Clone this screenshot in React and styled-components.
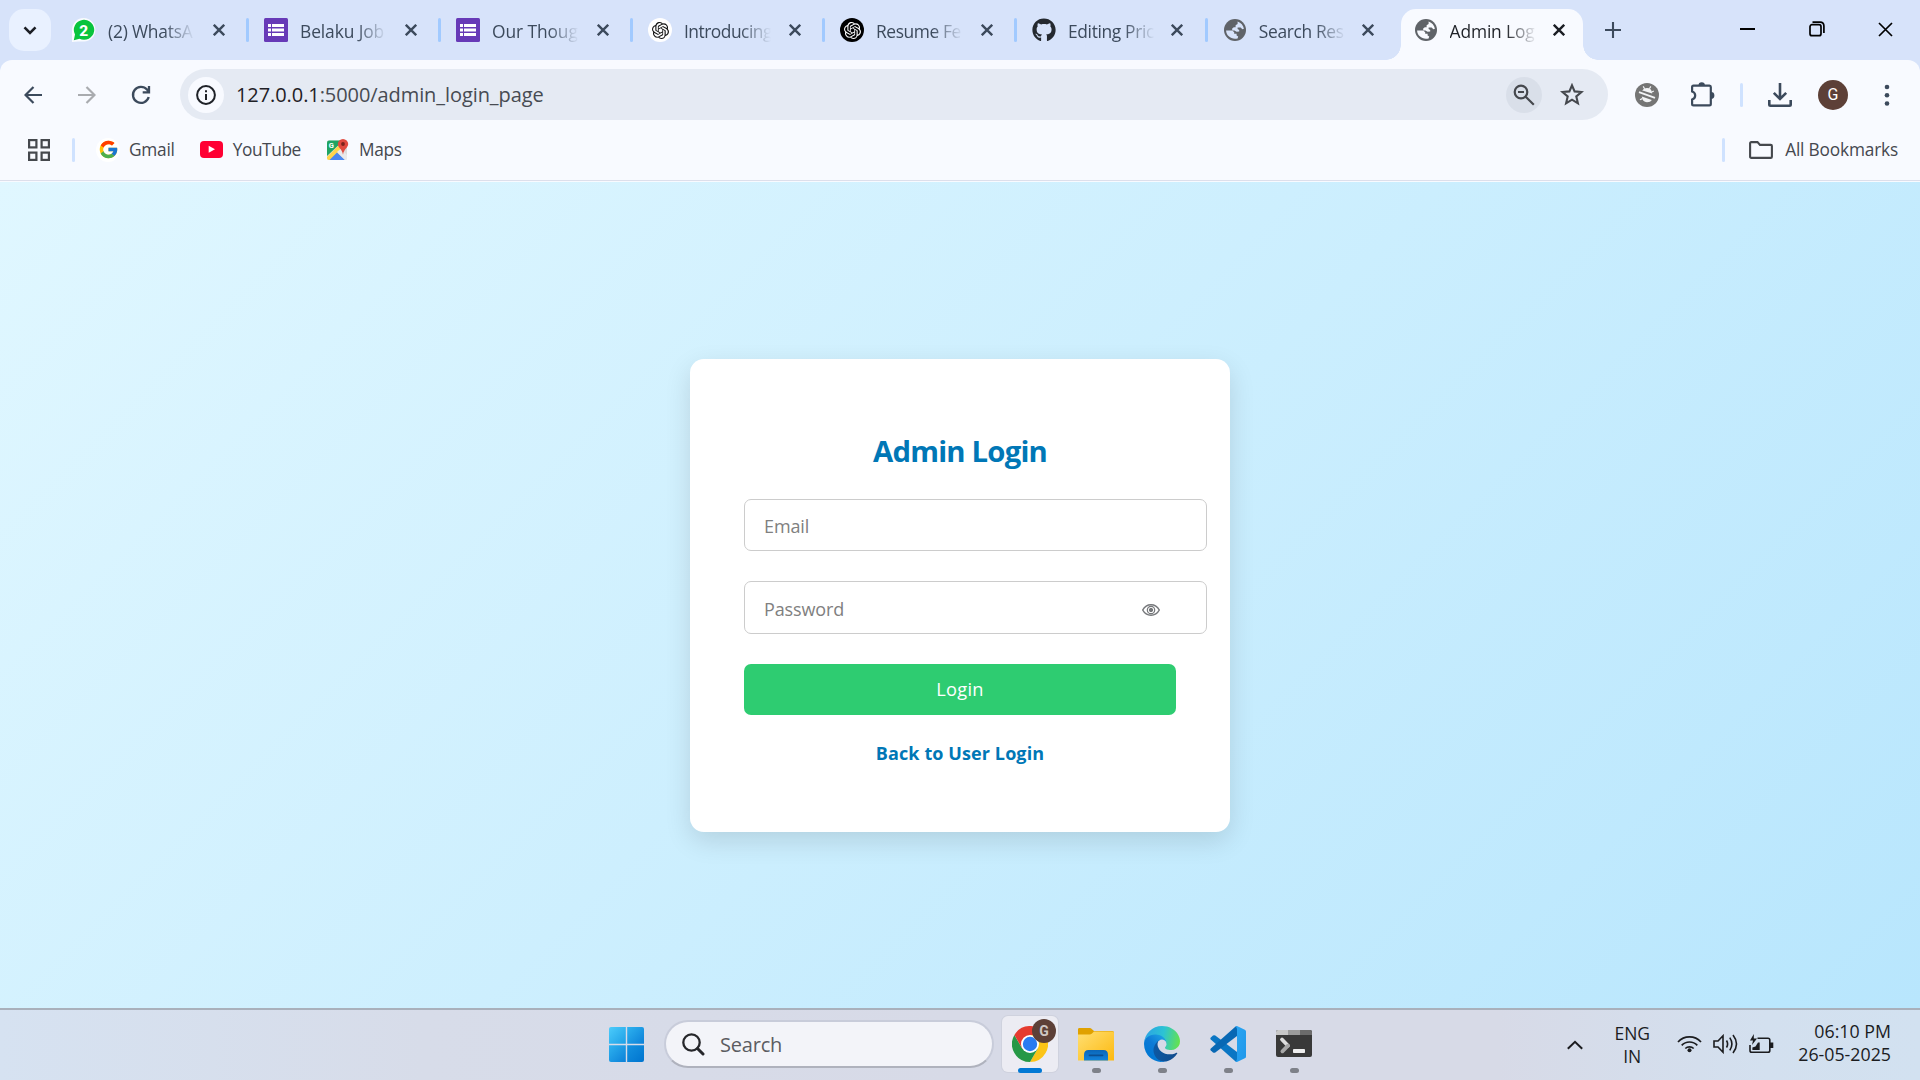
import React from "react";
import styled, { createGlobalStyle, css } from "styled-components";
import { FaGithub } from "react-icons/fa";
import { FcGoogle } from "react-icons/fc";
import { SiOpenai } from "react-icons/si";

const GlobalStyle = createGlobalStyle`
  * { box-sizing: border-box; }
  body {
    margin: 0;
    font-family: "Open Sans", "Noto Sans", sans-serif;
    overflow: hidden;
  }
`;

const Screen = styled.div`
  width: 1920px;
  height: 1080px;
  display: flex;
  flex-direction: column;
  overflow: hidden;
`;

/* ---------- tab strip ---------- */

const TabStrip = styled.div`
  height: 60px;
  background: #d7e3fa;
  display: flex;
  align-items: flex-start;
  padding: 9px 0 0 9px;
`;

const TabSearch = styled.button`
  width: 42px;
  height: 42px;
  margin-right: 21px;
  padding: 0;
  border: 0;
  border-radius: 15px;
  background: #e9f1ff;
  display: grid;
  place-items: center;
`;

const Tab = styled.div`
  position: relative;
  flex: none;
  width: ${(p) => (p.$tight ? 190.8 : 192)}px;
  height: 51px;
  padding-bottom: 9px;
  display: flex;
  align-items: center;
  color: #3c4a5c;
  ${(p) =>
    p.$active &&
    css`
      width: 182px;
      margin-left: -13px;
      padding-left: 13px;
      background: #f8faff;
      border-radius: 15px 15px 0 0;
      color: #1f2228;
      &::before,
      &::after {
        content: "";
        position: absolute;
        bottom: 0;
        width: 15px;
        height: 15px;
      }
      &::before {
        left: -15px;
        background: radial-gradient(circle at 0 0, transparent 14.5px, #f8faff 15px);
      }
      &::after {
        right: -15px;
        background: radial-gradient(circle at 100% 0, transparent 14.5px, #f8faff 15px);
      }
    `}
`;

const Favicon = styled.span`
  flex: none;
  width: 24px;
  height: 24px;
  margin-right: 12px;
  display: grid;
  place-items: center;
  svg { display: block; }
`;

const AiBadge = styled.span`
  width: 24px;
  height: 24px;
  border-radius: 50%;
  display: grid;
  place-items: center;
  background: ${(p) => (p.$dark ? "#000" : "#fff")};
  color: ${(p) => (p.$dark ? "#fff" : "#111")};
`;

const TabTitle = styled.span`
  flex: none;
  width: 87px;
  white-space: nowrap;
  font-size: 17.4px;
  line-height: 28px;
  padding-top: 1px;
  letter-spacing: ${(p) => p.$spacing || -0.4}px;
  mask-image: linear-gradient(90deg, #000 56px, transparent 87px);
`;

const TabClose = styled.span`
  flex: none;
  width: 24px;
  margin-left: ${(p) => (p.$tight ? 10 : 12)}px;
  display: grid;
  place-items: center;
`;

const TabDivider = styled.span`
  flex: none;
  width: 3px;
  height: 24px;
  margin-left: ${(p) => (p.$tight ? 16 : 15)}px;
  border-radius: 1.5px;
  background: #a1caff;
`;

const NewTab = styled.span`
  width: 60px;
  height: 42px;
  display: grid;
  place-items: center;
`;

const WindowControls = styled.div`
  margin-left: auto;
  display: flex;
  height: 42px;
`;

const WindowButton = styled.span`
  width: 69px;
  display: grid;
  place-items: center;
  padding-bottom: 2px;
`;

/* ---------- toolbar ---------- */

const BrowserPanel = styled.div`
  background: #d7e3fa;
`;

const PanelSurface = styled.div`
  background: #f8faff;
  border-radius: 12px 12px 0 0;
  height: 122px;
`;

const Toolbar = styled.div`
  height: 60px;
  padding: 9px 5px 0 6px;
  display: flex;
  align-items: center;
`;

const ToolCell = styled.span`
  flex: none;
  width: ${(p) => p.$w || 54}px;
  height: 51px;
  display: grid;
  place-items: center;
`;

const Omnibox = styled.div`
  width: 1428px;
  height: 51px;
  margin: 0 12px;
  padding: 0 18px 0 8px;
  border-radius: 26px;
  background: #e5eaf3;
  display: flex;
  align-items: center;
`;

const RoundChip = styled.span`
  flex: none;
  width: 36px;
  height: 36px;
  border-radius: 50%;
  display: grid;
  place-items: center;
  background: ${(p) => p.$bg || "transparent"};
`;

const Url = styled.span`
  flex: 1;
  margin-left: 12px;
  font-size: 20px;
  letter-spacing: -0.08px;
  color: #474b52;
  b { font-weight: 400; color: #1f2126; }
`;

const StarSlot = styled.span`
  margin-left: 12px;
  width: 36px;
  display: grid;
  place-items: center;
`;

const Rule = styled.span`
  flex: none;
  width: 3px;
  height: 24px;
  border-radius: 1.5px;
  background: #cfe2ff;
`;

const Avatar = styled.span`
  width: 30px;
  height: 30px;
  border-radius: 50%;
  background: #5d4037;
  color: #fff;
  display: grid;
  place-items: center;
  font: 400 16px Roboto, sans-serif;
`;

const BookmarkBar = styled.div`
  height: 61px;
  padding: 0 22px 1px 28px;
  border-bottom: 1px solid #dddfeb;
  display: flex;
  align-items: center;
`;

const Bookmark = styled.span`
  display: flex;
  align-items: center;
  margin-left: ${(p) => p.$gap}px;
  color: #45484f;
  font-size: 17.3px;
  letter-spacing: ${(p) => p.$spacing || -0.25}px;
`;

const BookmarkIcon = styled.span`
  width: ${(p) => p.$w}px;
  margin-right: ${(p) => p.$gap}px;
  display: grid;
  place-items: center;
  svg { display: block; }
`;

const GoogleDisc = styled.span`
  width: 24px;
  height: 24px;
  border-radius: 50%;
  background: #fff;
  display: grid;
  place-items: center;
`;

const Spacer = styled.span`
  flex: 1;
`;

/* ---------- page ---------- */

const Page = styled.main`
  height: 826px;
  background: linear-gradient(135deg, #e0f7ff, #b8e6fd);
  display: grid;
  place-items: center;
  padding-top: 1px;
`;

const Card = styled.form`
  width: 540px;
  height: 473px;
  padding: 69px 54px 0;
  border-radius: 14px;
  background: #fff;
  box-shadow: 0 9px 27px rgba(0, 0, 0, 0.12);
`;

const Title = styled.h2`
  margin: 0 0 24px;
  height: 47px;
  line-height: 46px;
  text-align: center;
  font-size: 29.3px;
  font-weight: 700;
  letter-spacing: -0.8px;
  color: #0077b6;
`;

const Field = styled.div`
  width: 463px;
  height: ${(p) => p.$h}px;
  margin-bottom: 30px;
  padding: 0 46px 0 19px;
  border: 1px solid #ccc;
  border-radius: 7px;
  display: flex;
  align-items: center;
`;

const Input = styled.input`
  flex: 1;
  min-width: 0;
  height: 100%;
  padding: 2px 0 0;
  border: 0;
  outline: 0;
  background: transparent;
  font: 400 18px "Open Sans", sans-serif;
  letter-spacing: -0.12px;
  &::placeholder { color: #808080; opacity: 1; }
`;

const EyeSlot = styled.span`
  padding-top: 4px;
  svg { display: block; }
`;

const LoginButton = styled.button`
  display: block;
  width: 432px;
  height: 51px;
  padding: 0 0 2px;
  border: 0;
  border-radius: 7px;
  background: #2ecc71;
  color: #fff;
  font: 500 18.2px "Open Sans", sans-serif;
  letter-spacing: 0.3px;
`;

const BackLink = styled.a`
  display: block;
  margin-top: 25px;
  text-align: center;
  font-size: 18px;
  line-height: 27px;
  font-weight: 700;
  letter-spacing: 0.1px;
  color: #0077b6;
`;

/* ---------- taskbar ---------- */

const Taskbar = styled.footer`
  height: 72px;
  border-top: 2px solid #a9b0bb;
  background: linear-gradient(90deg, #d6e2f1 0, #d7dce9 22%, #d7dae7 50%, #d7dae7 78%, #d3e0ef 92%, #d2e1f0 100%);
  display: flex;
  padding: 0 29px 0 609px;
`;

const StartButton = styled.span`
  width: 35px;
  height: 35px;
  margin: 17px 21px 0 0;
  svg { display: block; }
`;

const SearchBox = styled.div`
  width: 330px;
  height: 48px;
  margin: 10px 3px 0 -1px;
  padding: 0 0 0 16px;
  border: 2px solid #c8ccda;
  border-bottom: 2px solid #afb2bd;
  border-radius: 24px;
  background: #f3f4f9;
  display: flex;
  align-items: center;
  color: #5b5c61;
  font-size: 20px;
  letter-spacing: -0.2px;
  svg { margin-right: 15px; }
`;

const AppSlot = styled.div`
  flex: none;
  width: 66px;
  height: 70px;
  display: flex;
  flex-direction: column;
  align-items: center;
  padding-top: 6px;
`;

const AppTile = styled.div`
  position: relative;
  width: 56px;
  height: 56px;
  border-radius: 6px;
  display: flex;
  flex-direction: column;
  align-items: center;
  padding-top: 10px;
  background: ${(p) => (p.$active ? "#ececf3" : "transparent")};
  box-shadow: ${(p) => (p.$active ? "0 0 0 1px #cfd2de" : "none")};
  svg { display: block; flex: none; }
`;

const RunningMark = styled.span`
  flex: none;
  width: ${(p) => (p.$active ? 24 : 9)}px;
  height: 5px;
  margin-top: 6px;
  border-radius: 2.5px;
  background: ${(p) => (p.$active ? "#0078d4" : "#7e8189")};
`;

const ProfileBadge = styled.span`
  position: absolute;
  left: 30px;
  top: 3px;
  width: 24px;
  height: 24px;
  border-radius: 50%;
  background: #5d4037;
  color: #cfc7c4;
  display: grid;
  place-items: center;
  font: 700 14px Roboto, sans-serif;
`;

const Tray = styled.div`
  margin-left: auto;
  display: flex;
  align-items: center;
  height: 70px;
  color: #1b1c1f;
  line-height: 23px;
`;

const TrayIcons = styled.div`
  display: flex;
  align-items: center;
  gap: 11px;
  margin-right: 24px;
  padding-bottom: 2px;
`;

const Language = styled.div`
  width: 36px;
  margin: 0 27px 0 31px;
  text-align: center;
  font-size: 17.5px;
`;

const Clock = styled.div`
  text-align: right;
  font-size: 17.8px;
  padding-bottom: 4px;
`;

/* ---------- drawings ---------- */

const Cross = ({ size = 12, color = "#3c4a5c", w = 2.4 }) => (
  <svg width={size} height={size} viewBox="0 0 12 12" stroke={color} strokeWidth={w} fill="none">
    <path d="M.8 .8 11.2 11.2M11.2 .8 .8 11.2" />
  </svg>
);

const WhatsAppIcon = () => (
  <svg width="24" height="24" viewBox="0 0 24 24">
    <path d="M0 24V11.5A11.7 11.7 0 1 1 12 23.5C8 23.5 4 23.5 0 24Z" fill="#fff" opacity=".85" />
    <path d="M1.8 22.2 3 16.5A10.2 10 0 1 1 7.5 20.8Z" fill="#08c43d" />
    <text x="11.8" y="17.600" textAnchor="middle" fontFamily="Roboto, sans-serif" fontWeight="800" fontSize="15.500" fill="#fff">2</text>
  </svg>
);

const FormsIcon = () => (
  <svg width="24" height="24" viewBox="0 0 24 24">
    <rect width="24" height="24" rx="1.5" fill="#673ab7" />
    <g fill="#fff">
      <rect x="4" y="6" width="3" height="3" /><rect x="8" y="6" width="12" height="3" />
      <rect x="4" y="10.5" width="3" height="3" /><rect x="8" y="10.5" width="12" height="3" />
      <rect x="4" y="15" width="3" height="3" /><rect x="8" y="15" width="12" height="3" />
    </g>
  </svg>
);

const GlobeIcon = ({ bg }) => (
  <svg width="22" height="22" viewBox="0 0 22 22">
    <circle cx="11" cy="11" r="11" fill="#5f6368" />
    <path d="M13.600 2.600C17 3.700 19.400 6.600 19.900 9.800L18.400 10.200 16.600 8.400H13.600V10L15.200 11V12.400L12.600 12.800 10.400 11.400H8.200V9.600L9.800 8.200H11.600V6.200L13.600 5Z" fill={bg} />
    <path d="M2.100 11.600H8.200L10.200 13.200V14.800H12.600V16.600L14.200 17.400 13.600 19.400C8 21 2.200 17.200 2.100 11.600Z" fill={bg} />
  </svg>
);

const YouTubeIcon = () => (
  <svg width="23" height="17" viewBox="0 0 23 17">
    <rect width="23" height="17" rx="4" fill="#ff0033" />
    <path d="M8.7 4.8 15 8.3 8.7 11.8Z" fill="#fff" />
  </svg>
);

const MapsIcon = () => (
  <svg width="23" height="23" viewBox="0 0 23 23">
    <clipPath id="mapsTile"><rect x="0" y="2.5" width="20" height="19.5" rx="2" /></clipPath>
    <g clipPath="url(#mapsTile)">
      <rect x="0" y="2" width="20" height="20" fill="#dcdcdc" />
      <path d="M0 2H17L0 18Z" fill="#1fa463" />
      <path d="M0 19 14 5 18 9 3 24H0Z" fill="#ffd54a" />
      <path d="M2.500 22 10 14.500 18 22Z" fill="#4a87f0" />
      <path d="M10 14 14 10.500 21 18V22H18Z" fill="#e9e9ea" />
    </g>
    <text x="1.800" y="9.600" fontFamily="Roboto, sans-serif" fontWeight="700" fontSize="7.500" fill="#fff">G</text>
    <path d="M16 .9A5.200 5.200 0 0 0 10.800 6.100C10.800 9.800 15 10.600 16 16.800 17 10.600 21.200 9.800 21.200 6.100A5.200 5.200 0 0 0 16 .9Z" fill="#e04a3f" />
    <circle cx="16" cy="6" r="1.900" fill="#7b231c" />
  </svg>
);

const ExtensionBadge = () => (
  <svg width="24" height="24" viewBox="0 0 24 24">
    <circle cx="12" cy="12" r="12" fill="#757575" />
    <path d="M8.200 3.400 9.600 5.800M15.800 3.400 14.400 5.800M5 16.800 7.200 15.600M18.800 8 16.800 9" stroke="#f3f4f6" strokeWidth="1.200" fill="none" />
    <path d="M7.400 7.800C8.400 5.600 9.800 5 12 5C15 5 16.800 6.800 17.200 10.600L7.400 7.400ZM6.800 13.600 16.800 17C15.800 18.600 14.400 19.200 12 19.200C9 19.200 7.200 17.200 6.800 13.600Z" fill="#f3f4f6" />
    <path d="M4 9.200 20 14.800" stroke="#f3f4f6" strokeWidth="1.800" />
  </svg>
);

const WindowsLogo = () => (
  <svg width="35" height="35" viewBox="0 0 35 35">
    <linearGradient id="win" x1="0" y1="0" x2="1" y2="1" gradientUnits="objectBoundingBox">
      <stop offset="0" stopColor="#4cccfb" /><stop offset="1" stopColor="#1d9fe6" />
    </linearGradient>
    <linearGradient id="win2" x1="0" y1="0" x2="1" y2="1">
      <stop offset="0" stopColor="#2eb2ef" /><stop offset="1" stopColor="#0b80d8" />
    </linearGradient>
    <linearGradient id="win3" x1="0" y1="0" x2="1" y2="1">
      <stop offset="0" stopColor="#1492e0" /><stop offset="1" stopColor="#0074cf" />
    </linearGradient>
    <path d="M0 2Q0 0 2 0H16.8V16.8H0Z" fill="url(#win)" />
    <path d="M18.2 0H33Q35 0 35 2V16.8H18.2Z" fill="url(#win2)" />
    <path d="M0 18.2H16.8V35H2Q0 35 0 33Z" fill="url(#win2)" />
    <path d="M18.2 18.2H35V33Q35 35 33 35H18.2Z" fill="url(#win3)" />
  </svg>
);

const ChromeIcon = () => (
  <svg width="36" height="36" viewBox="0 0 36 36">
    <path d="M18 18 2.4 9A18 18 0 0 1 33.6 9Z" fill="#e53b30" />
    <path d="M18 9H33.6A18 18 0 0 1 18 36L25.8 22.5Z" fill="#fcc417" />
    <path d="M2.4 9A18 18 0 0 0 18 36L25.8 22.5 10.2 22.5Z" fill="#269846" />
    <path d="M2.4 9H18V18L10.2 22.5Z" fill="#e53b30" />
    <circle cx="18" cy="18" r="9" fill="#fff" />
    <circle cx="18" cy="18" r="7.2" fill="#2a7bf0" />
  </svg>
);

const ExplorerIcon = () => (
  <svg width="36" height="36" viewBox="0 0 36 36">
    <linearGradient id="folder" x1="0" y1="0" x2="1" y2="1">
      <stop offset="0" stopColor="#ffdf73" /><stop offset="1" stopColor="#fdb90f" />
    </linearGradient>
    <linearGradient id="drive" x1="0" y1="0" x2="0" y2="1">
      <stop offset="0" stopColor="#0b66b8" /><stop offset="1" stopColor="#1284dd" />
    </linearGradient>
    <path d="M0 3.3Q0 2 1.5 2H11.5Q13 2 14 3.2L16 5H34.5Q36 5 36 6.5V14H0Z" fill="#e0a100" />
    <path d="M0 8.5H11.5Q13 8.5 14 7.5L16 5.6H34.6Q36 5.6 36 7V34.6H0Z" fill="url(#folder)" />
    <path d="M6 34.6V29Q6 24 10.5 24H25.5Q30 24 30 29V34.6Z" fill="url(#drive)" />
    <path d="M11.5 29.3H24.5" stroke="#0b4f92" strokeWidth="1.8" strokeLinecap="round" />
  </svg>
);

const EdgeIcon = () => (
  <svg width="36" height="36" viewBox="0 0 256 256">
    <linearGradient id="edgeA" x1="63" y1="177" x2="242" y2="177" gradientUnits="userSpaceOnUse">
      <stop offset="0" stopColor="#0c59a4" /><stop offset="1" stopColor="#114a8b" />
    </linearGradient>
    <linearGradient id="edgeB" x1="157" y1="100" x2="46" y2="222" gradientUnits="userSpaceOnUse">
      <stop offset="0" stopColor="#1b9de2" /><stop offset=".5" stopColor="#0d7ad6" /><stop offset="1" stopColor="#0078d4" />
    </linearGradient>
    <linearGradient id="edgeC" x1="10" y1="60" x2="256" y2="110" gradientUnits="userSpaceOnUse">
      <stop offset="0" stopColor="#2aa5e4" /><stop offset=".5" stopColor="#2cc3d4" /><stop offset="1" stopColor="#66e34a" />
    </linearGradient>
    <path d="M231 190.500a93.700 93.700 0 0 1-10.500 4.700 101.900 101.900 0 0 1-35.900 6.500c-47.300 0-88.500-32.500-88.500-74.300a31.500 31.500 0 0 1 16.400-27.300c-42.800 1.800-53.800 46.400-53.800 72.500 0 73.900 68.100 81.400 82.800 81.400 7.900 0 19.800-2.300 27-4.600l1.300-.4a128.300 128.300 0 0 0 66.600-52.800 4 4 0 0 0-5.400-5.700Z" fill="url(#edgeA)" />
    <path d="M105.700 241.400a79.200 79.200 0 0 1-22.700-21.300 80.700 80.700 0 0 1 29.500-120c3.200-1.500 8.500-4.100 15.600-4a32.400 32.400 0 0 1 25.700 13 31.900 31.900 0 0 1 6.300 18.700c0-.2 24.500-79.600-80-79.600-43.900 0-80 41.600-80 78.200a130.200 130.200 0 0 0 12.100 56 128 128 0 0 0 156.400 67 75.500 75.500 0 0 1-62.800-8Z" fill="url(#edgeB)" />
    <path d="M152.300 148.900c-.9 1-3.400 2.500-3.400 5.600 0 2.600 1.700 5.200 4.800 7.300 14.300 10 41.400 8.600 41.500 8.600a59.600 59.600 0 0 0 30.300-8.300 61.400 61.400 0 0 0 30.400-52.900c.3-22.400-8-37.300-11.300-43.900C223.500 23.900 177.700 0 128 0A128 128 0 0 0 0 126.200c.5-36.500 36.800-66 80-66 3.500 0 23.500.3 42 10 16.300 8.600 24.900 19 30.800 29.200 6.200 10.700 7.300 24.100 7.300 29.500 0 5.300-2.700 13.300-7.800 20Z" fill="url(#edgeC)" />
  </svg>
);

const CodeIcon = () => (
  <svg width="36" height="36" viewBox="0 0 36 36">
    <linearGradient id="codeR" x1="0" y1="0" x2="1" y2="1">
      <stop offset="0" stopColor="#2ba6f2" /><stop offset="1" stopColor="#1f97ea" />
    </linearGradient>
    <path d="M.8 11.600 3 9.500Q4.200 8.800 5.300 9.600L27 26V36L25.300 35.200.8 13.600Q-.1 12.600.8 11.600Z" fill="#0a76c4" />
    <path d="M.8 24.400 3 26.500Q4.200 27.200 5.300 26.400L27 10V0L25.300.8.8 22.400Q-.1 23.400.8 24.400Z" fill="#0868b4" />
    <path d="M27 0 34.800 3.700Q36 4.300 36 5.600V30.400Q36 31.700 34.800 32.300L27 36Q25.800 36 25.200 35.200 27 35 27 33V3Q27 1 25.200.8 26 0 27 0Z" fill="url(#codeR)" />
  </svg>
);

const TerminalIcon = () => (
  <svg width="36" height="36" viewBox="0 0 36 36">
    <rect y="4" width="36" height="27" rx="2" fill="#393939" />
    <path d="M0 9V6Q0 4 2 4H12V9Z" fill="#c8c8c8" />
    <path d="M12 4H24V9H12Z" fill="#9b9b9b" />
    <path d="M24 4H34Q36 4 36 6V9H24Z" fill="#6b6b6b" />
    <path d="M6 13.500 12 19.700" stroke="#dedede" strokeWidth="3.8" strokeLinecap="round" />
    <path d="M12 19.700 6.400 25.300" stroke="#a8a8a8" strokeWidth="3.8" strokeLinecap="round" />
    <rect x="17" y="23" width="12" height="4" rx=".8" fill="#eee" />
  </svg>
);

const tabs = [
  { title: "(2) WhatsA", icon: <WhatsAppIcon />, spacing: -0.2 },
  { title: "Belaku Job", icon: <FormsIcon />, spacing: -0.1 },
  { title: "Our Thoug", icon: <FormsIcon />, spacing: -0.1 },
  { title: "Introducing", icon: <AiBadge><SiOpenai size={17} /></AiBadge>, spacing: -0.5 },
  { title: "Resume Fe", icon: <AiBadge $dark><SiOpenai size={17} /></AiBadge>, spacing: -0.4 },
  { title: "Editing Pric", icon: <FaGithub size={24} color="#24292f" />, spacing: -0.35, tight: true },
  { title: "Search Res", icon: <GlobeIcon bg="#d7e3fa" />, spacing: -0.35, tight: true, last: true },
  { title: "Admin Log", icon: <GlobeIcon bg="#f8faff" />, spacing: -0.15, tight: true, active: true },
];

const apps = [
  { icon: <ChromeIcon />, active: true },
  { icon: <ExplorerIcon /> },
  { icon: <EdgeIcon /> },
  { icon: <CodeIcon /> },
  { icon: <TerminalIcon /> },
];

function Browser() {
  return (
    <>
      <TabStrip>
        <TabSearch>
          <svg width="14" height="9" viewBox="0 0 14 9" fill="none" stroke="#1b1e24" strokeWidth="2.6"><path d="M1.500 1.300 7 6.800 12.500 1.300" /></svg>
        </TabSearch>
        {tabs.map((t) => (
          <Tab key={t.title} $active={t.active} $tight={t.tight}>
            <Favicon>{t.icon}</Favicon>
            <TabTitle $spacing={t.spacing}>{t.title}</TabTitle>
            <TabClose $tight={t.tight}><Cross color={t.active ? "#1b1e24" : "#3c4a5c"} /></TabClose>
            {!t.active && !t.last && <TabDivider $tight={t.tight} />}
          </Tab>
        ))}
        <NewTab>
          <svg width="16" height="16" viewBox="0 0 16 16" stroke="#3c4a5c" strokeWidth="2.1"><path d="M8 0V16M0 8H16" /></svg>
        </NewTab>
        <WindowControls>
          <WindowButton><svg width="15" height="15" viewBox="0 0 15 15"><path d="M0 7H15" stroke="#000" strokeWidth="2" /></svg></WindowButton>
          <WindowButton>
            <svg width="16" height="16" viewBox="0 0 16 16" fill="none" stroke="#000" strokeWidth="1.700">
              <rect x="1" y="3.700" width="11" height="11" rx="2" />
              <path d="M3.500 1.100H11Q14.900 1.100 14.900 5V12" />
            </svg>
          </WindowButton>
          <WindowButton><Cross size={15} color="#000" w={1.35} /></WindowButton>
        </WindowControls>
      </TabStrip>
      <BrowserPanel>
        <PanelSurface>
          <Toolbar>
            <ToolCell>
              <svg width="18" height="18" viewBox="0 0 18 18" fill="none" stroke="#3c4a5c" strokeWidth="2.200"><path d="M18 9H1.800M9.500 1 1.500 9 9.500 17" /></svg>
            </ToolCell>
            <ToolCell>
              <svg width="18" height="18" viewBox="0 0 18 18" fill="none" stroke="#a9abaf" strokeWidth="2.200"><path d="M0 9H16.200M8.500 1 16.500 9 8.500 17" /></svg>
            </ToolCell>
            <ToolCell>
              <svg width="20" height="20" viewBox="0 0 20 20" fill="none" stroke="#3c4a5c" strokeWidth="2.300"><path d="M17.700 12A8 8 0 1 1 16 4.600L18 7M18 1V7.300H11.700" /></svg>
            </ToolCell>
            <Omnibox>
              <RoundChip $bg="#f8faff">
                <svg width="20" height="20" viewBox="0 0 20 20" fill="none" stroke="#1f2228" strokeWidth="2"><circle cx="10" cy="10" r="8.900" /><path d="M10 9V15M10 5.200V7.300" /></svg>
              </RoundChip>
              <Url><b>127.0.0.1</b>:5000/admin_login_page</Url>
              <RoundChip $bg="#d9dfe9">
                <svg width="22" height="22" viewBox="0 0 22 22" fill="none" stroke="#45484d" strokeWidth="2.200"><circle cx="8" cy="8" r="6.300" /><path d="M12.700 12.700 20.800 20.800M5 8H11" /></svg>
              </RoundChip>
              <StarSlot>
                <svg width="24" height="23" viewBox="0 0 24 23" fill="none" stroke="#45484d" strokeWidth="2.100"><path d="M12 2.300 14.600 8.400 21.500 9 16.300 13.500 17.900 20.300 12 16.700 6.100 20.300 7.700 13.500 2.500 9 9.400 8.400Z" /></svg>
              </StarSlot>
            </Omnibox>
            <ToolCell $w={54}><ExtensionBadge /></ToolCell>
            <ToolCell $w={57}>
              <svg width="25" height="25" viewBox="0 0 25 25">
                <path d="M3.500 3.600H19.500Q20.800 3.600 20.800 5V22Q20.800 23.400 19.400 23.400H3.500Q2.100 23.400 2.100 22V17.500Q5.200 16.500 5.200 13.500 5.200 10.500 2.100 9.500V5Q2.100 3.600 3.500 3.600Z" fill="none" stroke="#3c4a5c" strokeWidth="2.200" />
                <path d="M8.500 3.500A3.200 3.200 0 0 1 14.900 3.500ZM21 10A3.400 3.400 0 0 1 21 16.800Z" fill="#3c4a5c" />
              </svg>
            </ToolCell>
            <ToolCell $w={21}><Rule /></ToolCell>
            <ToolCell $w={55}>
              <svg width="24" height="24" viewBox="0 0 24 24" fill="none" stroke="#3c4a5c" strokeWidth="2.600"><path d="M12 0V15.500M5.800 9.800 12 16 18.200 9.800M1.300 17V21.500Q1.300 22.700 2.500 22.700H21.500Q22.700 22.700 22.700 21.500V17" /></svg>
            </ToolCell>
            <ToolCell $w={52}><Avatar>G</Avatar></ToolCell>
            <ToolCell $w={56}>
              <svg width="6" height="22" viewBox="0 0 6 22" fill="#3c4a5c"><circle cx="3" cy="3" r="2.300" /><circle cx="3" cy="11.300" r="2.300" /><circle cx="3" cy="19.500" r="2.300" /></svg>
            </ToolCell>
          </Toolbar>
          <BookmarkBar>
            <BookmarkIcon $w={22} $gap={22}>
              <svg width="22" height="22" viewBox="0 0 22 22" fill="none" stroke="#45484d" strokeWidth="2.200">
                <rect x="1.100" y="1.100" width="7.300" height="7.300" /><rect x="13.600" y="1.100" width="7.300" height="7.300" />
                <rect x="1.100" y="13.600" width="7.300" height="7.300" /><rect x="13.600" y="13.600" width="7.300" height="7.300" />
              </svg>
            </BookmarkIcon>
            <Rule />
            <Bookmark $gap={21}><BookmarkIcon $w={24} $gap={9}><GoogleDisc><FcGoogle size={21} /></GoogleDisc></BookmarkIcon>Gmail</Bookmark>
            <Bookmark $gap={25} $spacing={-0.4}><BookmarkIcon $w={23} $gap={10}><YouTubeIcon /></BookmarkIcon>YouTube</Bookmark>
            <Bookmark $gap={26}><BookmarkIcon $w={23} $gap={9}><MapsIcon /></BookmarkIcon>Maps</Bookmark>
            <Spacer />
            <Rule />
            <Bookmark $gap={23} $spacing={-0.18}>
              <BookmarkIcon $w={25} $gap={12}>
                <svg width="24" height="18" viewBox="0 0 24 18" fill="none" stroke="#45484d" strokeWidth="2.100"><path d="M1.100 2.300Q1.100 1.100 2.300 1.100H8.500L11 3.900H21.700Q22.900 3.900 22.900 5.100V15.700Q22.900 16.900 21.700 16.900H2.300Q1.100 16.900 1.100 15.700Z" /></svg>
              </BookmarkIcon>
              All Bookmarks
            </Bookmark>
          </BookmarkBar>
        </PanelSurface>
      </BrowserPanel>
    </>
  );
}

function LoginCard() {
  return (
    <Page>
      <Card>
        <Title>Admin Login</Title>
        <Field $h={52}><Input type="email" placeholder="Email" /></Field>
        <Field $h={53}>
          <Input type="password" placeholder="Password" />
          <EyeSlot>
            <svg width="18" height="12" viewBox="0 0 18 12" fill="none" stroke="#75777a">
              <path d="M.7 6Q3.500 .8 9 .8T17.300 6Q14.500 11.200 9 11.200T.7 6Z" strokeWidth="1.500" />
              <circle cx="9" cy="6" r="3.700" strokeWidth="1.200" />
              <circle cx="9" cy="6" r="1.700" fill="#75777a" />
            </svg>
          </EyeSlot>
        </Field>
        <LoginButton type="button">Login</LoginButton>
        <BackLink>Back to User Login</BackLink>
      </Card>
    </Page>
  );
}

function WindowsTaskbar() {
  return (
    <Taskbar>
      <StartButton><WindowsLogo /></StartButton>
      <SearchBox>
        <svg width="23" height="23" viewBox="0 0 23 23" fill="none" stroke="#26272b"><circle cx="9.500" cy="9.500" r="8.200" strokeWidth="2.300" /><path d="M15.500 15.500 21 21" strokeWidth="3" strokeLinecap="round" /></svg>
        Search
      </SearchBox>
      {apps.map((a, i) => (
        <AppSlot key={i}>
          <AppTile $active={a.active}>
            {a.icon}
            {a.active && <ProfileBadge>G</ProfileBadge>}
            <RunningMark $active={a.active} />
          </AppTile>
        </AppSlot>
      ))}
      <Tray>
        <svg width="16" height="10" viewBox="0 0 16 10" fill="none" stroke="#1b1c1f" strokeWidth="2"><path d="M.8 8.800 8 1.800 15.200 8.800" /></svg>
        <Language>ENG<br />IN</Language>
        <TrayIcons>
          <svg width="25" height="18" viewBox="0 0 25 18" fill="none" stroke="#1b1c1f" strokeWidth="1.700">
            <path d="M1 7A15.500 15.500 0 0 1 24 7M4.700 10.400A10.600 10.600 0 0 1 20.300 10.400M8.300 13.500A6 6 0 0 1 16.700 13.500" />
            <circle cx="12.500" cy="15.300" r="2" fill="#1b1c1f" stroke="none" />
          </svg>
          <svg width="25" height="20" viewBox="0 0 25 20" fill="none" stroke="#1b1c1f" strokeWidth="1.600">
            <path d="M1 7H5L10 1.800V18.200L5 13H1ZM13.500 6.500Q15.700 10 13.500 13.500M16.800 3.600Q21 10 16.800 16.400M20 1Q27 10 20 19" />
          </svg>
          <svg width="25" height="20" viewBox="0 0 25 20" fill="none" stroke="#1b1c1f" strokeWidth="1.600">
            <path d="M8.500 4.200H19Q20.800 4.200 20.800 6V16.400Q20.800 18.200 19 18.200H2.800Q1 18.200 1 16.400V11" />
            <path d="M21.300 9.200V13.200H23.500V9.200Z" fill="#1b1c1f" />
            <path d="M3.400 15.900V13.500L6.500 12.600 9 8.500H10.700V15.900Z" fill="#1b1c1f" stroke="none" />
            <path d="M4.800 0 1 6.400H4L3 11 8 4.600H4.800Z" fill="#1b1c1f" stroke="none" />
          </svg>
        </TrayIcons>
        <Clock>06:10 PM<br />26-05-2025</Clock>
      </Tray>
    </Taskbar>
  );
}

export default function App() {
  return (
    <Screen>
      <GlobalStyle />
      <Browser />
      <LoginCard />
      <WindowsTaskbar />
    </Screen>
  );
}
